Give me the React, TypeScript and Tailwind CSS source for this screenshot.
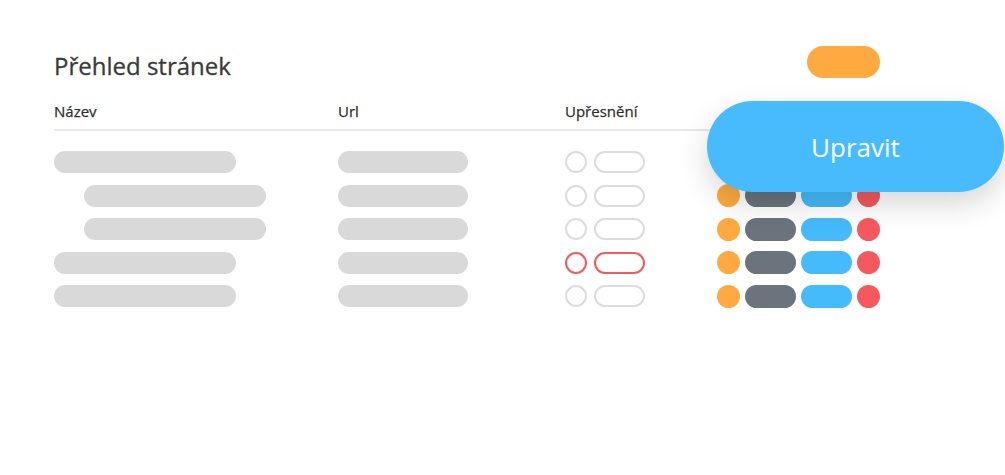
import React from "react";

const rows = [
  { indent: false, red: false },
  { indent: true, red: false },
  { indent: true, red: false },
  { indent: false, red: true },
  { indent: false, red: false },
];

export default function App() {
  return (
    <div
      className="relative w-[1005px] h-[475px] bg-white overflow-hidden"
      style={{ fontFamily: "'Open Sans', 'Noto Sans', sans-serif" }}
    >
      <div className="w-[826px] ml-[54px] pt-[46px]">
        <div className="flex items-start justify-between h-[32px]">
          <h1 className="mt-[4px] text-[24px] leading-[32px] font-medium text-[#3a3a3a] [-webkit-text-stroke:0.3px_#3a3a3a]">
            Přehled stránek
          </h1>
          <div className="w-[73px] h-[32px] rounded-full bg-[#ffa940]" />
        </div>

        <div className="mt-[23px] flex pb-[8px] border-b-2 border-[#e8e8e8] text-[15px] leading-[20px] font-medium text-[#2e2e2e] [-webkit-text-stroke:0.25px_#2e2e2e]">
          <div className="w-[284px]">Název</div>
          <div className="w-[227px]">Url</div>
          <div className="w-[152px]">Upřesnění</div>
          <div className="flex-1" />
        </div>

        <div className="mt-[20px] flex flex-col gap-[11.5px]">
          {rows.map((r, i) => (
            <div key={i} className="flex items-center h-[22px]">
              <div className="w-[284px] flex">
                <div
                  className={
                    r.indent
                      ? "ml-[30px] w-[182px] h-[22px] rounded-full bg-[#d9d9d9]"
                      : "w-[182px] h-[22px] rounded-full bg-[#d9d9d9]"
                  }
                />
              </div>
              <div className="w-[227px]">
                <div className="w-[130px] h-[22px] rounded-full bg-[#d9d9d9]" />
              </div>
              <div className="w-[152px] flex items-center gap-[7px]">
                <div
                  className={
                    r.red
                      ? "w-[22px] h-[22px] rounded-full border-2 border-[#f25a60]"
                      : "w-[22px] h-[22px] rounded-full border-2 border-[#dcdcdc]"
                  }
                />
                <div
                  className={
                    r.red
                      ? "w-[51px] h-[22px] rounded-full border-2 border-[#f25a60]"
                      : "w-[51px] h-[22px] rounded-full border-2 border-[#dcdcdc]"
                  }
                />
              </div>
              <div className="flex items-center gap-[5px]">
                <div className="w-[23px] h-[23px] rounded-full bg-[#ffa940]" />
                <div className="w-[51px] h-[23px] rounded-full bg-[#6b737c]" />
                <div className="w-[51px] h-[23px] rounded-full bg-[#45bbfb]" />
                <div className="w-[23px] h-[23px] rounded-full bg-[#f5595f]" />
              </div>
            </div>
          ))}
        </div>
      </div>

      <div className="absolute left-[707px] top-[101px] w-[297px] h-[91px] rounded-full bg-[#47bbfb] shadow-[0_12px_30px_rgba(0,0,0,0.16)] flex items-center justify-center">
        <span className="text-[26px] leading-[36px] text-white">Upravit</span>
      </div>
    </div>
  );
}
